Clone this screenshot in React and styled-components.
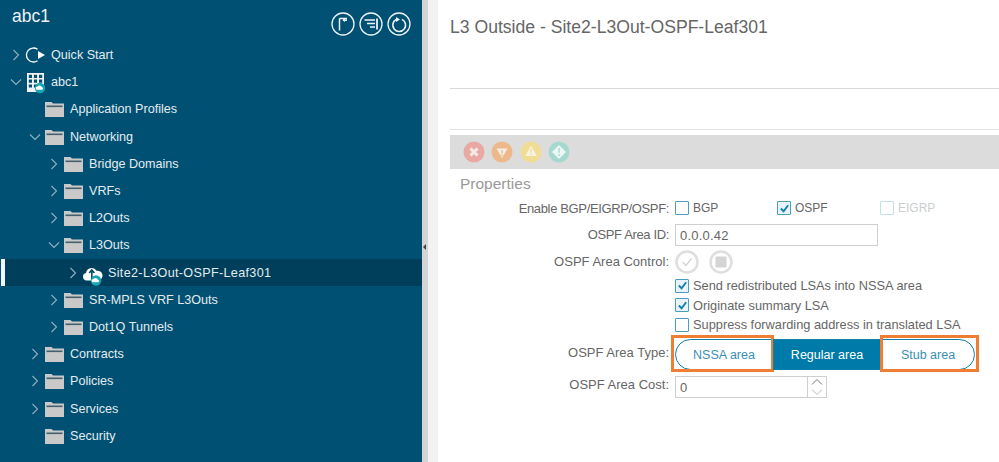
import React from "react";
import styled, { createGlobalStyle } from "styled-components";

const GlobalStyle = createGlobalStyle`
  html, body {
    margin: 0;
    padding: 0;
    background: #fff;
  }
  body {
    font-family: "Liberation Sans", Arial, sans-serif;
  }
`;

const Page = styled.div`
  display: flex;
  width: 999px;
  height: 462px;
  overflow: hidden;
`;

const Sidebar = styled.aside`
  width: 422px;
  flex-shrink: 0;
  background: #005073;
  color: #e6edf1;
`;

const SidebarHeader = styled.div`
  display: flex;
  justify-content: space-between;
  height: 41.5px;
  padding: 5px 11px 0 12px;
  box-sizing: border-box;
`;

const SidebarTitle = styled.div`
  font-size: 17.5px;
  line-height: 22px;
  color: #eef3f6;
`;

const HeaderIcons = styled.div`
  display: flex;
  gap: 4px;
  margin-top: 7px;
`;

const RoundIcon = styled.svg`
  width: 24px;
  height: 24px;
  fill: none;
  stroke: #eef3f6;
  stroke-width: 1.3;
`;

const Tree = styled.div`
  display: flex;
  flex-direction: column;
`;

const Row = styled.div`
  position: relative;
  display: flex;
  align-items: center;
  height: 27.2px;
  padding-left: ${(p) => 8 + p.$level * 19}px;
  font-size: 12.6px;
  background: ${(p) => (p.$selected ? "#003f5c" : "transparent")};
  margin-left: ${(p) => (p.$selected ? "5px" : "0")};
  ${(p) => p.$selected && `padding-left: ${3 + p.$level * 19}px; letter-spacing: 0.33px;`}
  &::before {
    content: ${(p) => (p.$selected ? '""' : "none")};
    position: absolute;
    left: -4px;
    top: 0;
    width: 4px;
    height: 100%;
    background: #f4f7f8;
  }
`;

const Arrow = styled.svg`
  width: 14px;
  height: 14px;
  flex-shrink: 0;
  margin-left: 1px;
  fill: none;
  stroke: #8fb0c1;
  stroke-width: 1.1;
`;

const ArrowSlot = styled.span`
  display: flex;
  width: 18px;
  flex-shrink: 0;
`;

const TreeIcon = styled.svg`
  width: 19px;
  height: 20px;
  flex-shrink: 0;
  margin-right: 6px;
  overflow: visible;
`;

const RowLabel = styled.span`
  color: #e4ecf0;
  white-space: nowrap;
`;

const Splitter = styled.div`
  position: relative;
  width: 6px;
  flex-shrink: 0;
  background: #d4d4d4;
  &::after {
    content: "";
    position: absolute;
    left: 1px;
    top: 244px;
    border-top: 3px solid transparent;
    border-bottom: 3px solid transparent;
    border-right: 3px solid #444;
  }
`;

const Gutter = styled.div`
  width: 10px;
  flex-shrink: 0;
  background: #f2f2f2;
`;

const Main = styled.main`
  flex: 1;
  min-width: 0;
  padding-left: 12px;
  background: #fff;
`;

const PageTitle = styled.h1`
  margin: 0;
  height: 89px;
  padding-top: 16px;
  box-sizing: border-box;
  font-size: 17.6px;
  line-height: 22px;
  font-weight: 400;
  color: #666;
  border-bottom: 1px solid #d9d9d9;
`;

const Blank = styled.div`
  height: 40px;
  border-bottom: 1px solid #e2e2e2;
`;

const FaultBar = styled.div`
  display: flex;
  align-items: center;
  gap: 6.3px;
  height: 34px;
  margin-top: 5px;
  padding-left: 13px;
  background: #dcdcdc;
`;

const FaultIcon = styled.svg`
  width: 22px;
  height: 22px;
`;

const SectionTitle = styled.div`
  height: 20px;
  padding: 6px 0 0 10px;
  font-size: 15.5px;
  line-height: 18px;
  color: #999;
`;

const Form = styled.div`
  display: flex;
  flex-direction: column;
`;

const FormRow = styled.div`
  display: grid;
  grid-template-columns: 219px 1fr;
  column-gap: 6px;
  align-items: center;
  height: ${(p) => p.$h}px;
`;

const Label = styled.div`
  font-size: 13px;
  color: #666;
  text-align: right;
  white-space: nowrap;
  letter-spacing: ${(p) => (p.$tight ? "-0.36px" : "0")};
`;

const Controls = styled.div`
  display: flex;
  align-items: center;
  margin-top: ${(p) => p.$mt || 0}px;
`;

const CheckItem = styled.label`
  display: flex;
  align-items: center;
  gap: 4px;
  width: ${(p) => p.$w || "auto"};
  font-size: ${(p) => (p.$small ? "12px" : "12.8px")};
  color: ${(p) => (p.$off ? "#c9ced1" : "#666")};
`;

const Box = styled.span`
  display: flex;
  align-items: center;
  justify-content: center;
  box-sizing: border-box;
  width: 14px;
  height: 14px;
  border: 1.5px solid ${(p) => (p.$off ? "#c4e0ec" : "#4a9cc0")};
  background: ${(p) => (p.$checked ? "#e8f3f8" : "#fff")};
  border-radius: 1px;
  svg {
    width: 11px;
    height: 11px;
    fill: none;
    stroke: #0f7fab;
    stroke-width: 2;
  }
`;

const TextInput = styled.div`
  display: flex;
  align-items: center;
  width: ${(p) => p.$w}px;
  height: 22px;
  box-sizing: border-box;
  padding-left: 4px;
  border: 1px solid #cfcfcf;
  font-size: 13px;
  color: #666;
  letter-spacing: 0.2px;
`;

const AreaControlIcon = styled.svg`
  width: 24px;
  height: 24px;
  margin-right: 10px;
`;

const CheckStack = styled.div`
  display: flex;
  flex-direction: column;
`;

const StackRow = styled.div`
  display: flex;
  align-items: center;
  height: 19.5px;
`;

const Segmented = styled.div`
  display: flex;
  height: 31px;
  margin-top: 4px;
`;

const Segment = styled.div`
  position: relative;
  display: flex;
  align-items: center;
  justify-content: center;
  box-sizing: border-box;
  width: ${(p) => p.$w}px;
  font-size: 12.5px;
  border: 1px solid #0f7fab;
  border-radius: ${(p) => p.$radius || "0"};
  background: ${(p) => (p.$active ? "#007aa8" : "#fff")};
  color: ${(p) => (p.$active ? "#fff" : "#3a8fb5")};
  ${(p) =>
    p.$highlight &&
    `&::after {
      content: "";
      position: absolute;
      top: -5px;
      bottom: -3px;
      left: ${p.$highlight === "left" ? "-5px" : "-2px"};
      right: ${p.$highlight === "left" ? "-2px" : "-5px"};
      border: 3px solid #ee7f32;
    }`}
`;

const Stepper = styled.div`
  display: flex;
  flex-direction: column;
  margin-left: auto;
  width: 18px;
  height: 20px;
  border-left: 1px solid #cfcfcf;
  svg {
    width: 18px;
    height: 10px;
    fill: none;
    stroke-width: 1;
  }
`;

const Chevron = ({ open }) => (
  <Arrow viewBox="0 0 14 14">
    {open ? <path d="M2 4.5 L7 9.5 L12 4.5" /> : <path d="M4.5 2 L9.5 7 L4.5 12" />}
  </Arrow>
);

const Folder = () => (
  <TreeIcon viewBox="0 0 19 20">
    <path d="M0 3 H6.5 L8 4.5 H19 V18 H0 Z" fill="#c9c9c9" />
    <rect x="1.5" y="6.5" width="16" height="1.6" fill="#43606f" />
  </TreeIcon>
);

const CloudBadge = ({ cx, cy }) => (
  <>
    <circle cx={cx} cy={cy} r="5.2" fill="#17a5b4" />
    <path
      d={`M${cx - 3} ${cy + 1.8} a1.5 1.5 0 0 1 0.3 -3 a2.4 2.4 0 0 1 4.4 0.2 a1.4 1.4 0 0 1 -0.2 2.8 Z`}
      fill="#fff"
    />
  </>
);

const QuickStartIcon = () => (
  <TreeIcon viewBox="0 0 19 20">
    <path d="M11.5 4.3 A7 7 0 1 0 11.5 15.7" fill="none" stroke="#fff" strokeWidth="1.3" />
    <path d="M12 6 L19 10 L12 14 Z" fill="#fff" />
  </TreeIcon>
);

const TenantIcon = () => (
  <TreeIcon viewBox="0 0 19 20">
    <path
      fillRule="evenodd"
      fill="#f2f2f2"
      d="M1 1 H18 V15 H11 V20 H1 Z M2.8 2.8 V6 H6 V2.8 Z M7.9 2.8 V6 H11.1 V2.8 Z M13 2.8 V6 H16.2 V2.8 Z M2.8 7.6 V10.8 H6 V7.6 Z M7.9 7.6 V10.8 H11.1 V7.6 Z M13 7.6 V10.8 H16.2 V7.6 Z M2.8 12.4 V15.6 H6 V12.4 Z M7.9 12.4 V15.6 H11.1 V12.4 Z"
    />
    <CloudBadge cx={14} cy={16} />
  </TreeIcon>
);

const L3OutIcon = () => (
  <TreeIcon viewBox="0 0 19 20">
    <path
      d="M3.6 17.5 A3.8 3.8 0 0 1 3 10 A5.8 5.8 0 0 1 13.6 7.8 A4.6 4.6 0 0 1 15.6 17.5 Z"
      fill="#fff"
    />
    <path d="M8.8 16.5 V7.4 M6.2 10 L8.8 7 L11.4 10" fill="none" stroke="#004a69" strokeWidth="1.6" />
    <CloudBadge cx={13} cy={17.5} />
  </TreeIcon>
);

const treeRows = [
  { level: 0, arrow: "closed", icon: <QuickStartIcon />, label: "Quick Start" },
  { level: 0, arrow: "open", icon: <TenantIcon />, label: "abc1" },
  { level: 1, icon: <Folder />, label: "Application Profiles" },
  { level: 1, arrow: "open", icon: <Folder />, label: "Networking" },
  { level: 2, arrow: "closed", icon: <Folder />, label: "Bridge Domains" },
  { level: 2, arrow: "closed", icon: <Folder />, label: "VRFs" },
  { level: 2, arrow: "closed", icon: <Folder />, label: "L2Outs" },
  { level: 2, arrow: "open", icon: <Folder />, label: "L3Outs" },
  { level: 3, arrow: "closed", icon: <L3OutIcon />, label: "Site2-L3Out-OSPF-Leaf301", selected: true },
  { level: 2, arrow: "closed", icon: <Folder />, label: "SR-MPLS VRF L3Outs" },
  { level: 2, arrow: "closed", icon: <Folder />, label: "Dot1Q Tunnels" },
  { level: 1, arrow: "closed", icon: <Folder />, label: "Contracts" },
  { level: 1, arrow: "closed", icon: <Folder />, label: "Policies" },
  { level: 1, arrow: "closed", icon: <Folder />, label: "Services" },
  { level: 1, icon: <Folder />, label: "Security" },
];

const Fault = ({ color, children }) => (
  <FaultIcon viewBox="0 0 22 22">
    <circle cx="11" cy="11" r="10.5" fill={color} />
    {children}
  </FaultIcon>
);

const Check = ({ checked, off, label, w, small }) => (
  <CheckItem $w={w} $off={off} $small={small}>
    <Box $checked={checked} $off={off}>
      {checked && (
        <svg viewBox="0 0 12 12">
          <path d="M2 6 L5 9 L10 2.5" />
        </svg>
      )}
    </Box>
    {label}
  </CheckItem>
);

export default function App() {
  return (
    <Page>
      <GlobalStyle />
      <Sidebar>
        <SidebarHeader>
          <SidebarTitle>abc1</SidebarTitle>
          <HeaderIcons>
            <RoundIcon viewBox="0 0 24 24">
              <circle cx="12" cy="12" r="11" />
              <path d="M8.5 18.5 V6.5 M8.5 6.5 H16 M12 8.2 H16" strokeWidth="1.5" />
              <path d="M11.5 8.2 L14 5.8 V10 Z" fill="#eef3f6" stroke="none" />
            </RoundIcon>
            <RoundIcon viewBox="0 0 24 24">
              <circle cx="12" cy="12" r="11" />
              <path d="M5.5 8 H16 M8 11.5 H16 M11 15 H16" />
              <path d="M18 6.5 V17.5" strokeWidth="1.8" />
            </RoundIcon>
            <RoundIcon viewBox="0 0 24 24">
              <circle cx="12" cy="12" r="11" />
              <path d="M9.2 7.5 A6.4 6.4 0 1 0 15 7.4" strokeWidth="1.6" />
              <path d="M9 5 L13 7.6 L9 10 Z" fill="#eef3f6" stroke="none" />
            </RoundIcon>
          </HeaderIcons>
        </SidebarHeader>
        <Tree>
          {treeRows.map((row) => (
            <Row key={row.label} $level={row.level} $selected={row.selected}>
              <ArrowSlot>{row.arrow && <Chevron open={row.arrow === "open"} />}</ArrowSlot>
              {row.icon}
              <RowLabel>{row.label}</RowLabel>
            </Row>
          ))}
        </Tree>
      </Sidebar>
      <Splitter />
      <Gutter />
      <Main>
        <PageTitle>L3 Outside - Site2-L3Out-OSPF-Leaf301</PageTitle>
        <Blank />
        <FaultBar>
          <Fault color="#e9a9a2">
            <path d="M7.5 7.5 L14.5 14.5 M14.5 7.5 L7.5 14.5" stroke="#f3ebe8" strokeWidth="3" />
          </Fault>
          <Fault color="#eeb98a">
            <path d="M5.5 7.5 H16.5 L11 17 Z" fill="#f6eee6" />
            <path d="M11 9 V12.5 M11 13.6 V15" stroke="#eeb98a" strokeWidth="1.4" />
          </Fault>
          <Fault color="#f1dc94">
            <path d="M11 4.8 L16.8 15 H5.2 Z" fill="#f7f3e3" />
            <path d="M11 7.8 V11.4 M11 12.4 V14" stroke="#f1dc94" strokeWidth="1.4" />
          </Fault>
          <Fault color="#a5d9cf">
            <path d="M11 4 L18 11 L11 18 L4 11 Z" fill="#eef6f4" />
            <path d="M11 7 V11.8 M11 13 V15" stroke="#a5d9cf" strokeWidth="1.4" />
          </Fault>
        </FaultBar>
        <SectionTitle>Properties</SectionTitle>
        <Form>
          <FormRow $h={26}>
            <Label $tight>Enable BGP/EIGRP/OSPF:</Label>
            <Controls>
              <Check label="BGP" w="102px" small />
              <Check label="OSPF" checked w="103px" small />
              <Check label="EIGRP" off small />
            </Controls>
          </FormRow>
          <FormRow $h={26}>
            <Label $tight>OSPF Area ID:</Label>
            <Controls $mt={2}>
              <TextInput $w={203}>0.0.0.42</TextInput>
            </Controls>
          </FormRow>
          <FormRow $h={29}>
            <Label>OSPF Area Control:</Label>
            <Controls>
              <AreaControlIcon viewBox="0 0 24 24">
                <circle cx="12" cy="12" r="10.5" fill="#fff" stroke="#dedede" strokeWidth="2.5" />
                <path d="M7.5 12 L11 15.5 L16.5 8.5" fill="none" stroke="#d4d4d4" strokeWidth="1.3" />
              </AreaControlIcon>
              <AreaControlIcon viewBox="0 0 24 24">
                <circle cx="12" cy="12" r="10.5" fill="#fff" stroke="#dedede" strokeWidth="2.5" />
                <rect x="6.5" y="6.5" width="11" height="11" rx="1" fill="#d4d4d4" />
              </AreaControlIcon>
            </Controls>
          </FormRow>
          <FormRow $h={58}>
            <span />
            <CheckStack>
              <StackRow>
                <Check label="Send redistributed LSAs into NSSA area" checked />
              </StackRow>
              <StackRow>
                <Check label="Originate summary LSA" checked />
              </StackRow>
              <StackRow>
                <Check label="Suppress forwarding address in translated LSA" />
              </StackRow>
            </CheckStack>
          </FormRow>
          <FormRow $h={37}>
            <Label>OSPF Area Type:</Label>
            <Segmented>
              <Segment $w={98} $radius="16px 0 0 16px" $highlight="left">NSSA area</Segment>
              <Segment $w={108} $active>Regular area</Segment>
              <Segment $w={94} $radius="0 16px 16px 0" $highlight="right">Stub area</Segment>
            </Segmented>
          </FormRow>
          <FormRow $h={26}>
            <Label>OSPF Area Cost:</Label>
            <Controls $mt={5}>
              <TextInput $w={152}>
                0
                <Stepper>
                  <svg viewBox="0 0 18 10" stroke="#777">
                    <path d="M4 7.5 L9 2.5 L14 7.5" />
                  </svg>
                  <svg viewBox="0 0 18 10" stroke="#bbb">
                    <path d="M4 2.5 L9 7.5 L14 2.5" />
                  </svg>
                </Stepper>
              </TextInput>
            </Controls>
          </FormRow>
        </Form>
      </Main>
    </Page>
  );
}
